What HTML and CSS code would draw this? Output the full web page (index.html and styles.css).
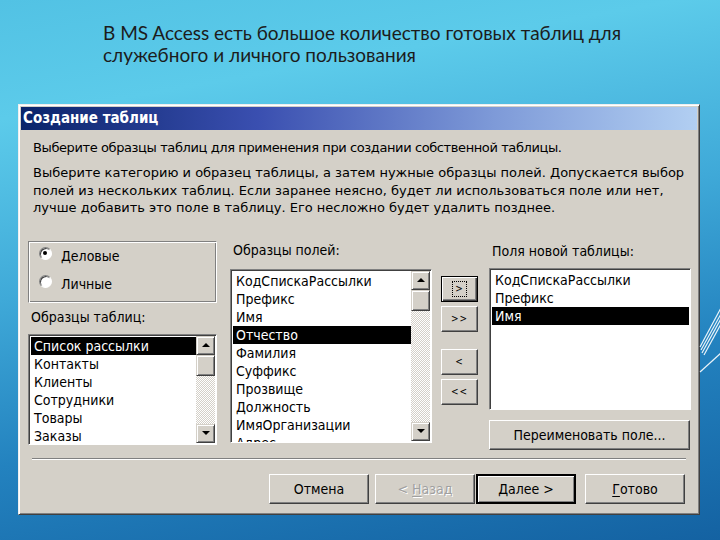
FILE: index.html
```html
<!DOCTYPE html>
<html lang="ru">
<head>
<meta charset="utf-8">
<title>Создание таблиц</title>
<link rel="stylesheet" href="styles.css">
</head>
<body>
<div class="slide">
  <h1 class="slide-title">В MS Access есть большое количество готовых таблиц для<br>служебного и личного пользования</h1>

  <div class="dialog">
    <div class="titlebar">Создание таблиц</div>
    <div class="content">
      <p class="intro">Выберите образцы таблиц для применения при создании собственной таблицы.</p>
      <p class="desc">Выберите категорию и образец таблицы, а затем нужные образцы полей. Допускается выбор<br>полей из нескольких таблиц. Если заранее неясно, будет ли использоваться поле или нет,<br>лучше добавить это поле в таблицу. Его несложно будет удалить позднее.</p>

      <div class="main">
        <div class="col col-cat">
          <div class="groupbox">
            <div class="radio-row"><span class="radio checked"></span><span>Деловые</span></div>
            <div class="radio-row"><span class="radio"></span><span>Личные</span></div>
          </div>
          <div class="label label-tables">Образцы таблиц:</div>
          <div class="listbox lb-tables">
            <ul class="items">
              <li class="sel">Список рассылки</li>
              <li>Контакты</li>
              <li>Клиенты</li>
              <li>Сотрудники</li>
              <li>Товары</li>
              <li>Заказы</li>
            </ul>
            <div class="scrollbar">
              <div class="sb-btn"><span class="tri-up"></span></div>
              <div class="sb-thumb"></div>
              <div class="sb-track"></div>
              <div class="sb-btn"><span class="tri-down"></span></div>
            </div>
          </div>
        </div>

        <div class="col col-fields">
          <div class="label">Образцы полей:</div>
          <div class="listbox lb-fields">
            <ul class="items">
              <li>КодСпискаРассылки</li>
              <li>Префикс</li>
              <li>Имя</li>
              <li class="sel">Отчество</li>
              <li>Фамилия</li>
              <li>Суффикс</li>
              <li>Прозвище</li>
              <li>Должность</li>
              <li>ИмяОрганизации</li>
              <li>Адрес</li>
            </ul>
            <div class="scrollbar">
              <div class="sb-btn"><span class="tri-up"></span></div>
              <div class="sb-thumb"></div>
              <div class="sb-track"></div>
              <div class="sb-btn"><span class="tri-down"></span></div>
            </div>
          </div>
        </div>

        <div class="col col-move">
          <button class="btn mv mv-focus"><span class="focus">&gt;</span></button>
          <button class="btn mv"><span>&gt;&gt;</span></button>
          <button class="btn mv mv-gap"><span>&lt;</span></button>
          <button class="btn mv"><span>&lt;&lt;</span></button>
        </div>

        <div class="col col-new">
          <div class="label">Поля новой таблицы:</div>
          <div class="listbox lb-new">
            <ul class="items">
              <li>КодСпискаРассылки</li>
              <li>Префикс</li>
              <li class="sel">Имя</li>
            </ul>
          </div>
          <button class="btn rename"><span>Переименовать поле...</span></button>
        </div>
      </div>

      <div class="separator"></div>

      <div class="footer">
        <button class="btn fbtn"><span>Отмена</span></button>
        <button class="btn fbtn disabled"><span>&lt; <u>Н</u>азад</span></button>
        <button class="btn fbtn default"><span><u>Д</u>алее &gt;</span></button>
        <button class="btn fbtn finish"><span><u>Г</u>отово</span></button>
      </div>
    </div>
  </div>

  <svg class="deco" width="24" height="90" viewBox="0 0 24 90">
    <g stroke="#ffffff" stroke-width="1.2" fill="none" opacity="0.9">
      <line x1="2" y1="47" x2="24" y2="6"/>
      <line x1="3" y1="50" x2="24" y2="12"/>
      <line x1="4" y1="53" x2="24" y2="17"/>
      <line x1="6" y1="55" x2="24" y2="22"/>
      <line x1="2" y1="72" x2="24" y2="52"/>
    </g>
  </svg>
</div>
</body>
</html>
```

FILE: styles.css
```css
* { box-sizing: border-box; }

html, body {
  margin: 0;
  padding: 0;
}

body {
  width: 720px;
  height: 540px;
  overflow: hidden;
}

.slide {
  position: relative;
  width: 720px;
  height: 540px;
  background: linear-gradient(170deg, #52c2e4 0%, #5ccbea 18%, #3fa9d8 45%, #2382bf 70%, #1462a2 100%);
  padding-top: 22px;
}

.slide-title {
  margin: 0 0 0 103px;
  font-family: "Lato", "DejaVu Sans", sans-serif;
  font-weight: 400;
  font-size: 19px;
  line-height: 22px;
  color: #1c1c1c;
  height: 60px;
}

.deco {
  position: absolute;
  left: 698px;
  top: 300px;
}

/* ---------- dialog ---------- */
.dialog {
  margin: 22px 0 0 18px;
  width: 682px;
  height: 411px;
  background: #d4d0c8;
  border: 1px solid;
  border-color: #eeeeee #404040 #404040 #eeeeee;
  box-shadow: inset 1px 1px #ffffff, inset -1px -1px #808080;
  padding: 2px;
  font-family: "DejaVu Sans", sans-serif;
  font-size: 13px;
  color: #000;
  display: flex;
  flex-direction: column;
}

.label, .items, .radio-row, .btn, .titlebar {
  font-family: "DejaVu Sans Condensed", "DejaVu Sans", sans-serif;
}

.titlebar {
  height: 23px;
  background: linear-gradient(to right, #0a246a 0%, #3a4fb0 35%, #7e9ad8 70%, #b2cff2 100%);
  color: #fff;
  font-weight: bold;
  font-size: 15px;
  line-height: 23px;
  padding-left: 2px;
}

.content {
  padding: 0 6px 0 7px;
  flex: 1;
  display: flex;
  flex-direction: column;
}

.intro {
  margin: 9px 0 0 5px;
  line-height: 17px;
  letter-spacing: -0.4px;
}

.desc {
  margin: 8px 0 0 5px;
  line-height: 17.5px;
}

/* ---------- main area ---------- */
.main {
  display: flex;
  margin-top: 24px;
  height: 210px;
}

.col {
  display: flex;
  flex-direction: column;
}

.col-cat { width: 189px; }
.col-fields { width: 202px; margin-left: 13px; }
.col-move { width: 37px; margin-left: 9px; padding-top: 35px; }
.col-new { width: 202px; margin-left: 11px; }

.groupbox {
  height: 62px;
  border: 1px solid;
  border-color: #808080 #ffffff #ffffff #808080;
  box-shadow: inset 1px 1px #ffffff, inset -1px -1px #808080;
  padding: 0 0 0 10px;
}

.radio-row {
  display: flex;
  align-items: center;
  height: 28px;
  font-size: 14px;
}

.radio {
  position: relative;
  width: 13px;
  height: 13px;
  border-radius: 50%;
  background: #fff;
  border: 1px solid;
  border-color: #808080 #ffffff #ffffff #808080;
  box-shadow: inset 1px 1px #404040;
  margin-right: 9px;
  margin-top: -4px;
  flex: none;
}

.radio.checked::after {
  content: "";
  position: absolute;
  left: 3px;
  top: 3px;
  width: 4px;
  height: 4px;
  border-radius: 50%;
  background: #000;
}

.label {
  height: 19px;
  line-height: 19px;
  padding-left: 3px;
  font-size: 14px;
}

.label-tables {
  margin-top: 5px;
  margin-bottom: 7px;
}

.col-fields .label { margin-top: 0; margin-bottom: 9px; }
.col-new .label { margin-top: 1px; margin-bottom: 7px; }

.listbox {
  position: relative;
  background: #fff;
  border: 1px solid;
  border-color: #808080 #ffffff #ffffff #808080;
  box-shadow: inset 1px 1px #404040;
  padding: 1px 1px 0 2px;
  overflow: hidden;
  display: flex;
}

.lb-tables { height: 111px; }
.lb-fields { height: 174px; }
.lb-new { height: 142px; }

.items {
  list-style: none;
  margin: 0;
  padding: 1px 0 0;
  flex: 1;
  font-size: 14px;
  white-space: nowrap;
  overflow: hidden;
}

.items li {
  height: 18px;
  line-height: 18px;
  padding-left: 3px;
}

.items li.sel {
  background: #000;
  color: #fff;
}

.scrollbar {
  width: 19px;
  flex: none;
  display: flex;
  flex-direction: column;
  padding-bottom: 1px;
}

.sb-btn, .sb-thumb {
  background: #d4d0c8;
  border: 1px solid;
  border-color: #d4d0c8 #404040 #404040 #d4d0c8;
  box-shadow: inset 1px 1px #ffffff, inset -1px -1px #808080;
  display: flex;
  align-items: center;
  justify-content: center;
  flex: none;
}

.sb-btn { height: 19px; }
.sb-thumb { height: 21px; }

.sb-track {
  flex: 1;
  background: repeating-conic-gradient(#d4d0c8 0 25%, #ffffff 0 50%) 0 0 / 2px 2px;
}

.tri-up, .tri-down {
  width: 0;
  height: 0;
  border-left: 4px solid transparent;
  border-right: 4px solid transparent;
}
.tri-up { border-bottom: 4px solid #000; }
.tri-down { border-top: 4px solid #000; }

/* ---------- buttons ---------- */
.btn {
  font-size: 14px;
  color: #000;
  background: #d4d0c8;
  border: 1px solid;
  border-color: #ffffff #404040 #404040 #ffffff;
  box-shadow: inset -1px -1px #808080;
  padding: 0;
  margin: 0;
  display: flex;
  align-items: center;
  justify-content: center;
  white-space: pre;
}

.mv {
  width: 37px;
  height: 26px;
  font-size: 10px;
  margin-bottom: 4px;
  letter-spacing: 1px;
}

.mv-gap { margin-top: 13px; }

.mv-focus {
  border-color: #000;
  box-shadow: inset 1px 1px #ffffff, inset -1px -1px #404040, inset -2px -2px #808080;
}

.focus {
  outline: 1px dotted #000;
  padding: 1px 2px;
  line-height: 12px;
}

.rename {
  margin-top: 10px;
  height: 30px;
  width: 201px;
}

.separator {
  margin: 7px 5px 0 4px;
  height: 2px;
  border-top: 1px solid #808080;
  border-bottom: 1px solid #ffffff;
}

.footer {
  display: flex;
  margin-top: 14px;
  padding-left: 241px;
}

.fbtn {
  width: 100px;
  height: 30px;
}

.fbtn + .fbtn { margin-left: 6px; }
.fbtn.default {
  margin-left: 1px;
  border: 2px solid #000;
  box-shadow: inset 1px 1px #ffffff, inset -1px -1px #808080;
}
.fbtn.finish { margin-left: 9px; }

.fbtn.disabled {
  color: #a0a0a0;
  text-shadow: 1px 1px #ffffff;
}

.fbtn u { text-decoration: underline; text-underline-offset: 2px; }
```
